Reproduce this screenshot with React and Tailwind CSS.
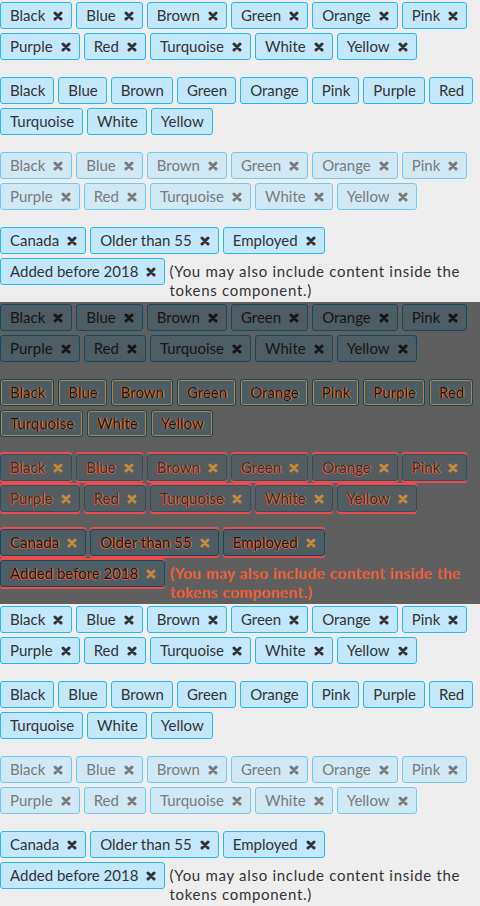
import React from "react";

const colors = ["Black", "Blue", "Brown", "Green", "Orange", "Pink", "Purple", "Red", "Turquoise", "White", "Yellow"];
const filters = ["Canada", "Older than 55", "Employed", "Added before 2018"];

// light / dark palettes; dark is the same page under a 60% black veil
const looks = {
  light: {
    page: "bg-[#eeeeee]",
    token: "bg-[#c3e8fb] border-[#29b6f6] text-[#333333]",
    muted: "bg-[#d0e9f5] border-[#6fcbf3] text-[#7a7a7a]",
    icon: "text-[#333333]",
    mutedIcon: "text-[#7a7a7a]",
    note: "text-[#333333]",
  },
  dark: {
    page: "bg-[#5f5f5f]",
    token: "bg-[#4e5d64] border-[#104962] text-[#151515]",
    muted: "bg-[#535d62] border-[#2c5161] text-[#303030]",
    icon: "text-[#151515]",
    mutedIcon: "text-[#303030]",
    note: "text-[#151515]",
  },
};

function XIcon({ className }) {
  return (
    <svg viewBox="0 0 10 10" className={"w-[10px] h-[10px] ml-2 shrink-0 " + className}>
      <path d="M2 2 L8 8 M8 2 L2 8" stroke="currentColor" strokeWidth="3" strokeLinecap="round" />
    </svg>
  );
}

function Token({ label, removable, muted, look, glitch }) {
  const L = looks[look];
  let extra = "";
  if (glitch === "orange") extra = "[text-shadow:1px_0_0_#c8893a,-1px_0_0_#d9573c] shadow-[inset_0_0_0_1px_#b9843f]";
  if (glitch === "red") extra = "shadow-[0_-2px_0_#ef4b4b,0_2px_0_#ef4b4b] [text-shadow:1px_0_0_#c8893a,-1px_1px_0_#ef4b4b]";
  return (
    <span
      className={
        "inline-flex items-center border rounded-[3px] pl-[9px] pr-2 py-[3px] leading-[19px] text-[15px] mr-1 my-0.5 " +
        (muted ? L.muted : L.token) +
        " " +
        extra
      }
    >
      {label}
      {removable && <XIcon className={(muted ? L.mutedIcon : L.icon) + (glitch ? " !text-[#c8893a]" : "")} />}
    </span>
  );
}

function Section({ look }) {
  const L = looks[look];
  const dark = look === "dark";
  return (
    <div className={"h-[302px] " + L.page}>
      <div className="flex flex-wrap mb-[13px]">
        {colors.map((c) => (
          <Token key={c} label={c} removable look={look} />
        ))}
      </div>
      <div className="flex flex-wrap mb-[13px]">
        {colors.map((c) => (
          <Token key={c} label={c} look={look} glitch={dark ? "orange" : null} />
        ))}
      </div>
      <div className="flex flex-wrap mb-[13px]">
        {colors.map((c) => (
          <Token key={c} label={c} removable muted look={look} glitch={dark ? "red" : null} />
        ))}
      </div>
      <div className="flex flex-wrap items-baseline">
        {filters.map((f) => (
          <Token key={f} label={f} removable look={look} glitch={dark ? "red" : null} />
        ))}
        <span
          className={
            "flex-1 min-w-0 text-[15px] leading-[19px] tracking-[0.7px] " +
            (dark ? "text-[#e8473f] [text-shadow:1px_0_0_#c8893a]" : L.note)
          }
        >
          (You may also include content inside the tokens component.)
        </span>
      </div>
    </div>
  );
}

export default function App() {
  return (
    <div className="w-[480px] h-[906px] overflow-hidden bg-[#eeeeee] font-['Lato','Liberation_Sans',sans-serif]">
      <Section look="light" />
      <Section look="dark" />
      <Section look="light" />
    </div>
  );
}
